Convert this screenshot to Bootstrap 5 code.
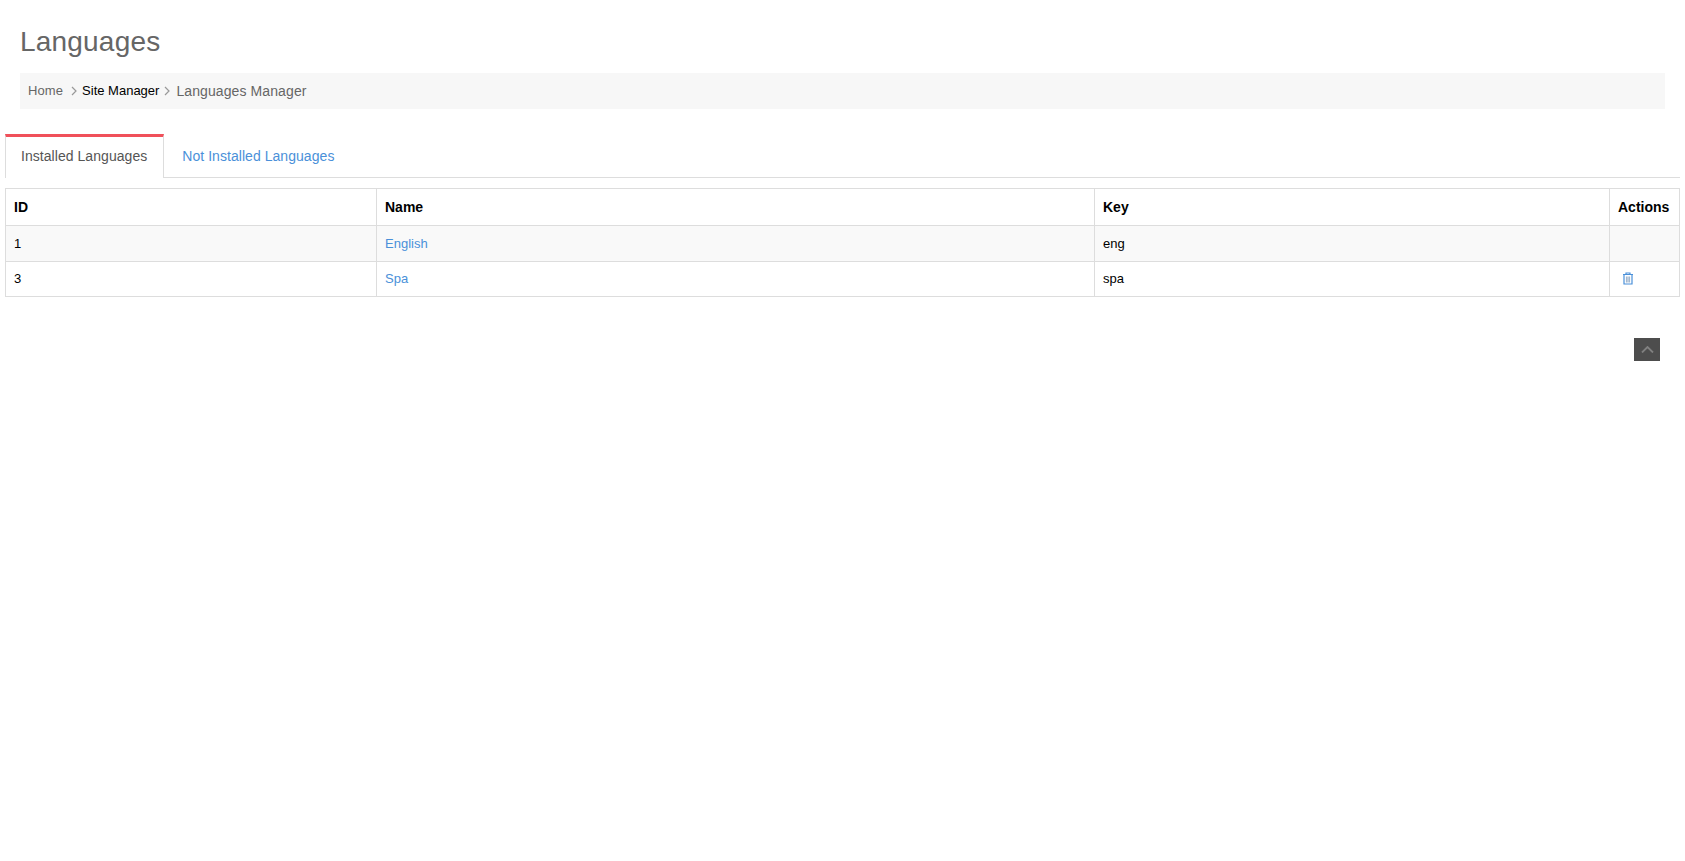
<!DOCTYPE html>
<html lang="en">
<head>
<meta charset="utf-8">
<title>Languages</title>
<link href="https://cdn.jsdelivr.net/npm/bootstrap@5.3.0/dist/css/bootstrap.min.css" rel="stylesheet">
<style>
body{font-family:"Liberation Sans",Arial,sans-serif;font-size:14px;color:#000;background:#fff}
.page-shell{padding:0 6px 0 5px}
.head-block{padding:0 14px 0 15px}
.page-title{font-size:28px;line-height:32px;font-weight:400;color:#666;margin:0;padding:26px 0 0;letter-spacing:.2px}
.crumbs{background:#f7f7f7;margin:15px 0 0;padding:0 8px;height:36px;align-items:center;font-size:13px;line-height:20px}
.crumbs .breadcrumb-item{color:#666;letter-spacing:.1px}
.crumbs .breadcrumb-item a{color:#666;text-decoration:none}
.crumbs .breadcrumb-item.here a{color:#000;letter-spacing:0}
.crumbs .breadcrumb-item+.breadcrumb-item{padding-left:8px}
.crumbs .breadcrumb-item.crumb-last{padding-left:5px;font-size:14px;letter-spacing:.1px}
.crumbs .breadcrumb-item+.breadcrumb-item::before{display:none}
.sep-ico{width:6px;height:10px;margin-right:5px;flex:none}
.crumb-last .sep-ico{margin-right:6px}
.tabs-row{margin:25px -1px 0 0;border-bottom:1px solid #ddd}
.tabs-row .nav-link{font-size:14px;line-height:20px;letter-spacing:.05px;border:0;border-radius:0;color:#4a90d9;margin:0;height:43px}
.tabs-row .nav-link.active{color:#555;background:#fff;border-top:3px solid #f0505a;border-left:1px solid #ddd;border-right:1px solid #ddd;padding:9px 16px 10px 15px;margin-bottom:-1px;height:44px}
.tabs-row .nav-link.plain{padding:12px 18px 10px 18px}
.lang-table{margin:10px 0 0;font-size:13px;border-color:#ddd;table-layout:fixed;width:100%;color:#000}
.lang-table th,.lang-table td{padding:8px;border:1px solid #ddd;vertical-align:middle;color:#000;box-shadow:none}
.lang-table th{font-size:14px;line-height:20px;font-weight:700;height:37px}
.lang-table td{line-height:18px;height:35px}
.lang-table tr.odd-row td{background:#f9f9f9;height:36px;line-height:19px}
.lang-table a{color:#4a90d9;text-decoration:none}
.col-id{width:371px}.col-name{width:718px}.col-key{width:515px}.col-act{width:70px}
.trash-ico{width:12px;height:13px;display:block;margin:-1px 0 0 4px}
.top-row{padding:41px 19px 0 0}
.top-btn{width:26px;height:23px;background:#4d4d4d;border:0;padding:0 0 1px;border-radius:0}
</style>
</head>
<body>
<div class="page-shell">
  <div class="head-block">
    <h1 class="page-title">Languages</h1>
    <ol class="breadcrumb crumbs d-flex">
      <li class="breadcrumb-item"><a href="#">Home</a></li>
      <li class="breadcrumb-item here d-flex align-items-center"><svg class="sep-ico" viewBox="0 0 6 10" fill="none" stroke="#999" stroke-width="1.2"><path d="M1 1l4 4-4 4"/></svg><a href="#">Site Manager</a></li>
      <li class="breadcrumb-item crumb-last d-flex align-items-center"><svg class="sep-ico" viewBox="0 0 6 10" fill="none" stroke="#999" stroke-width="1.2"><path d="M1 1l4 4-4 4"/></svg><span>Languages Manager</span></li>
    </ol>
  </div>
  <ul class="nav tabs-row">
    <li class="nav-item"><a class="nav-link active" href="#">Installed Languages</a></li>
    <li class="nav-item"><a class="nav-link plain" href="#">Not Installed Languages</a></li>
  </ul>
  <table class="table lang-table">
    <colgroup><col class="col-id"><col class="col-name"><col class="col-key"><col class="col-act"></colgroup>
    <thead><tr><th>ID</th><th>Name</th><th>Key</th><th>Actions</th></tr></thead>
    <tbody>
      <tr class="odd-row"><td>1</td><td><a href="#">English</a></td><td>eng</td><td></td></tr>
      <tr><td>3</td><td><a href="#">Spa</a></td><td>spa</td><td><a href="#" aria-label="Delete"><svg class="trash-ico" viewBox="0 0 12 13" fill="none" stroke="#4a90d9" stroke-width="1.2"><path d="M1 2.5h10M4 2.5v-1.5h4v1.5M2 2.5v9.5h8v-9.5"/><path stroke="#a3b8cf" d="M4.5 4.5v6M6 4.5v6M7.5 4.5v6"/></svg></a></td></tr>
    </tbody>
  </table>
  <div class="top-row d-flex justify-content-end">
    <button class="top-btn d-flex align-items-center justify-content-center" aria-label="Back to top"><svg width="13" height="7" viewBox="0 0 13 7" fill="none" stroke="#808080" stroke-width="1.8"><path d="M1 6.5l5.5-5.5 5.5 5.5"/></svg></button>
  </div>
</div>
<script src="https://cdn.jsdelivr.net/npm/bootstrap@5.3.0/dist/js/bootstrap.bundle.min.js"></script>
</body>
</html>
